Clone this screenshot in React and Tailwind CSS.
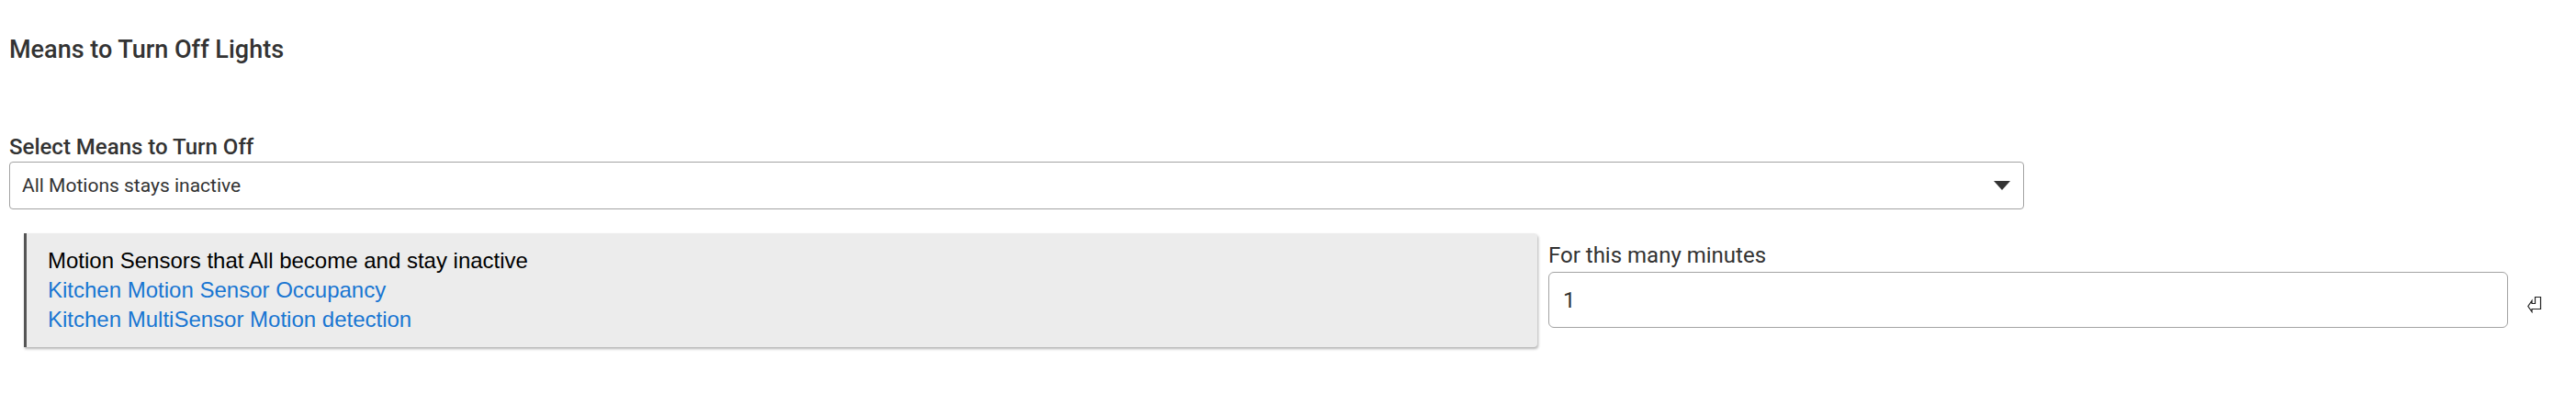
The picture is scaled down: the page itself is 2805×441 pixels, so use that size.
import React from 'react';

const roboto = { fontFamily: 'Roboto, "Noto Sans", sans-serif' };

function ReturnIcon() {
  return (
    <svg width="16" height="18" viewBox="0 0 16 18" className="block">
      <path
        d="M14.5 0.5 L8.5 0.5 L8.5 7.5 L5 7.5 L5 4.5 L0.8 10.5 L5 16.5 L5 13.5 L14.5 13.5 Z"
        fill="none"
        stroke="#222"
        strokeWidth="1.2"
        strokeLinejoin="miter"
      />
    </svg>
  );
}

export default function App() {
  const sensors = ['Kitchen Motion Sensor Occupancy', 'Kitchen MultiSensor Motion detection'];

  return (
    <div className="w-[2805px] h-[441px] bg-white pl-[10px] text-[#333]" style={roboto}>
      {/* section title */}
      <h2 className="pt-[38px] text-[27px] leading-[32px] font-medium text-[#333]">Means to Turn Off Lights</h2>

      {/* select */}
      <div className="mt-[76px] text-[24px] leading-[28px] font-medium text-[#333]">Select Means to Turn Off</div>
      <div className="mt-[2px] flex h-[52px] w-[2194px] items-center justify-between rounded-[4px] border border-[#a3a3a3] bg-white pl-[13px] pr-[14px]">
        <span className="pt-[2px] text-[21px] text-[#333]">All Motions stays inactive</span>
        <svg width="18" height="10" viewBox="0 0 18 10" className="block">
          <path d="M0 0 L18 0 L9 10 Z" fill="#333" />
        </svg>
      </div>

      {/* devices + minutes */}
      <div className="mt-[26px] ml-[16px] flex items-start">
        <div
          className="w-[1648px] rounded-r-[4px] border-l-[3px] border-[#555] bg-[#ececec] pt-[14px] pb-[14px] pl-[23px] text-[24px] leading-[32px] shadow-[1px_2px_3px_rgba(0,0,0,0.3)]"
          style={{ fontFamily: '"Liberation Sans", Arial, sans-serif' }}
        >
          <div className="text-black">Motion Sensors that All become and stay inactive</div>
          {sensors.map((s) => (
            <div key={s} className="text-[#1976d2]">{s}</div>
          ))}
        </div>

        <div className="ml-[12px] pt-[10px]">
          <div className="text-[24px] leading-[28px] text-[#333]">For this many minutes</div>
          <div className="mt-[4px] flex h-[61px] w-[1045px] items-center rounded-[6px] border border-[#a3a3a3] bg-white pl-[15px]">
            <span className="text-[24px] text-[#333]">1</span>
          </div>
        </div>

        <div className="ml-[21px] mt-[69px]">
          <ReturnIcon />
        </div>
      </div>
    </div>
  );
}
